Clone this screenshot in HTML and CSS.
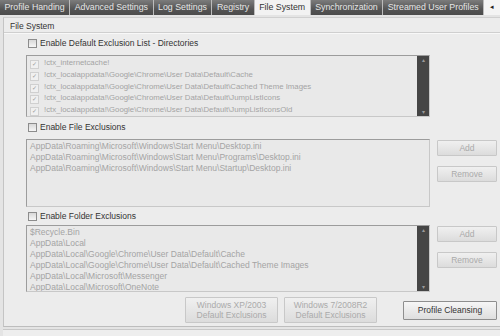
FILE: index.html
```html
<!DOCTYPE html>
<html lang="en">
<head>
    <meta charset="UTF-8">
    <title>File System</title>
    <link rel="stylesheet" href="styles.css">
</head>
<body>

    <div class="tabs">
        <div class="tab">Profile Handing</div>
        <div class="tab">Advanced Settings</div>
        <div class="tab">Log Settings</div>
        <div class="tab">Registry</div>
        <div class="tab active">File System</div>
        <div class="tab">Synchronization</div>
        <div class="tab">Streamed User Profiles</div>
        <div class="tab-scroll">&#9666;</div>
    </div>

    <div class="panel">
        <div class="panel-title">File System</div>

        <div class="section">
            <label class="check-row"><span class="box"></span>Enable Default Exclusion List - Directories</label>
            <div class="row">
                <div class="list list-checked">
                    <div class="items">
                        <div class="item"><span class="tick">&#10003;</span>!ctx_internetcache!</div>
                        <div class="item"><span class="tick">&#10003;</span>!ctx_localappdata!\Google\Chrome\User Data\Default\Cache</div>
                        <div class="item"><span class="tick">&#10003;</span>!ctx_localappdata!\Google\Chrome\User Data\Default\Cached Theme Images</div>
                        <div class="item"><span class="tick">&#10003;</span>!ctx_localappdata!\Google\Chrome\User Data\Default\JumpListIcons</div>
                        <div class="item"><span class="tick">&#10003;</span>!ctx_localappdata!\Google\Chrome\User Data\Default\JumpListIconsOld</div>
                    </div>
                    <div class="scrollbar"><span>&#9652;</span><span>&#9662;</span></div>
                </div>
            </div>
        </div>

        <div class="section">
            <label class="check-row"><span class="box"></span>Enable File Exclusions</label>
            <div class="row">
                <div class="list list-files">
                    <div class="items">
                        <div class="item">AppData\Roaming\Microsoft\Windows\Start Menu\Desktop.ini</div>
                        <div class="item">AppData\Roaming\Microsoft\Windows\Start Menu\Programs\Desktop.ini</div>
                        <div class="item">AppData\Roaming\Microsoft\Windows\Start Menu\Startup\Desktop.ini</div>
                    </div>
                </div>
                <div class="side-buttons">
                    <button class="btn" disabled>Add</button>
                    <button class="btn" disabled>Remove</button>
                </div>
            </div>
        </div>

        <div class="section section-tight">
            <label class="check-row"><span class="box"></span>Enable Folder Exclusions</label>
            <div class="row">
                <div class="list list-folders">
                    <div class="items">
                        <div class="item">$Recycle.Bin</div>
                        <div class="item">AppData\Local</div>
                        <div class="item">AppData\Local\Google\Chrome\User Data\Default\Cache</div>
                        <div class="item">AppData\Local\Google\Chrome\User Data\Default\Cached Theme Images</div>
                        <div class="item">AppData\Local\Microsoft\Messenger</div>
                        <div class="item">AppData\Local\Microsoft\OneNote</div>
                    </div>
                    <div class="scrollbar"><span>&#9652;</span><span>&#9662;</span></div>
                </div>
                <div class="side-buttons">
                    <button class="btn" disabled>Add</button>
                    <button class="btn" disabled>Remove</button>
                </div>
            </div>
        </div>

        <div class="footer">
            <button class="btn btn-big" disabled>Windows XP/2003<br>Default Exclusions</button>
            <button class="btn btn-big" disabled>Windows 7/2008R2<br>Default Exclusions</button>
            <button class="btn btn-main">Profile Cleansing</button>
        </div>
    </div>

    <div class="statusbar"></div>

</body>
</html>
```

FILE: styles.css
```css
body {
    margin: 0;
    width: 500px;
    height: 336px;
    overflow: hidden;
    background-color: #e4e4e4;
    font-family: "Liberation Sans", Arial, sans-serif;
    font-size: 8.5px;
    color: #333;
}
.tabs {
    display: flex;
    height: 15px;
    background-color: #f0f0f0;
}
.tab {
    padding: 0 4.5px;
    line-height: 15px;
    font-size: 8.8px;
    color: #e6e6e6;
    background: linear-gradient(#7c7c7c, #555 60%, #4c4c4c);
    border-right: 1px solid #bbb;
    white-space: nowrap;
}
.tab.active {
    background: #f2f2f2;
    color: #333;
}
.tab-scroll {
    flex: 1;
    padding-left: 6px;
    line-height: 14px;
    font-size: 7px;
    color: #222;
    background-color: #f4f4f4;
}
.panel {
    margin: 2px 0 0 3px;
    height: 310px;
    background-color: #ececec;
    border-left: 1px solid #c4c4c4;
    border-top: 1px solid #d0d0d0;
    border-bottom: 1px solid #bdbdbd;
    box-sizing: border-box;
}
.panel-title {
    height: 14px;
    padding-left: 6px;
    line-height: 16px;
    border-bottom: 1px solid #cfcfcf;
    box-shadow: 0 1px 0 #f8f8f8;
}
.section {
    padding-left: 22px;
}
.check-row {
    display: flex;
    align-items: center;
    height: 12px;
    padding-left: 2px;
    margin-top: 4px;
}
.box {
    width: 7px;
    height: 7px;
    margin-right: 3px;
    border: 1px solid #8c8c8c;
    background: linear-gradient(#d8d8d8, #f6f6f6);
}
.row {
    display: flex;
    gap: 7px;
    margin-top: 6px;
}
.section-tight .check-row {
    margin-top: 3px;
}
.section-tight .row {
    margin-top: 3px;
}
.list {
    display: flex;
    width: 404px;
    box-sizing: border-box;
    background-color: #e9e9e9;
    border: 1px solid #9c9c9c;
    border-right-color: #c8c8c8;
    border-bottom-color: #c8c8c8;
    color: #a4a4a4;
    font-size: 8.5px;
}
.items {
    flex: 1;
    padding: 1px 3px;
    overflow: hidden;
}
.item {
    height: 11px;
    line-height: 11px;
    white-space: nowrap;
}
.list-checked {
    height: 62px;
    font-size: 7.8px;
}
.list-checked .item {
    height: 11.75px;
    line-height: 11.75px;
}
.tick {
    display: inline-block;
    width: 7px;
    height: 7px;
    margin-right: 5px;
    line-height: 7px;
    font-size: 6px;
    text-align: center;
    vertical-align: -1px;
    color: #999;
    border: 1px solid #d0d0d0;
    background-color: #f0f0f0;
}
.list-files {
    height: 68px;
}
.list-folders {
    height: 67px;
}
.scrollbar {
    display: flex;
    flex-direction: column;
    justify-content: space-between;
    width: 12px;
    background-color: #454545;
    color: #999;
    font-size: 6px;
    text-align: center;
    line-height: 8px;
}
.side-buttons {
    display: flex;
    flex-direction: column;
    gap: 10px;
    padding-top: 1px;
}
.btn {
    width: 60px;
    height: 16px;
    padding: 0;
    font-family: inherit;
    font-size: 8.5px;
    color: #333;
    background: linear-gradient(#f6f6f6, #dedede);
    border: 1px solid #b4b4b4;
    border-radius: 1px;
}
.btn:disabled {
    color: #aaa;
    background: linear-gradient(#f0f0f0, #dcdcdc);
    border-color: #c8c8c8;
}
.footer {
    display: flex;
    justify-content: flex-end;
    align-items: center;
    padding-right: 3px;
    margin-top: 5px;
}
.btn-big {
    width: 93px;
    height: 26px;
    line-height: 10px;
    margin-left: 6px;
}
.btn-main {
    width: 94px;
    height: 19px;
    margin-left: 26px;
    border-color: #8e8e8e;
}
.statusbar {
    margin: 2px 0 0 3px;
    height: 10px;
    background-color: #eeeeee;
    border-top: 1px solid #c8c8c8;
}
```
